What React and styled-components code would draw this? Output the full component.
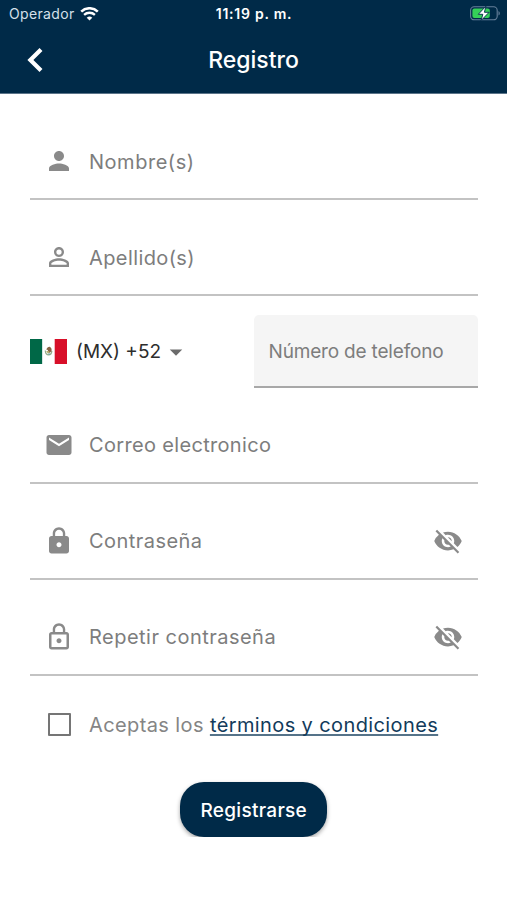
import React, { useState } from 'react'
import styled, { createGlobalStyle } from 'styled-components'
import {
  MdPerson,
  MdPersonOutline,
  MdEmail,
  MdLock,
  MdLockOutline,
  MdVisibilityOff,
  MdArrowDropDown,
} from 'react-icons/md'

function WifiIcon() {
  return (
    <svg width="19" height="14" viewBox="0 0 19 14" fill="none">
      <path d="M1.2 4.6a12 12 0 0 1 16.6 0" stroke="#fff" strokeWidth="2.6" />
      <path d="M4.1 7.9a7.8 7.8 0 0 1 10.8 0" stroke="#fff" strokeWidth="2.3" />
      <path d="M9.5 13.6 6.7 10.8a4 4 0 0 1 5.6 0z" fill="#fff" />
    </svg>
  )
}

function BatteryIcon() {
  return (
    <svg width="31" height="15" viewBox="0 0 31 15">
      <rect
        x="0.6"
        y="0.8"
        width="26.6"
        height="13"
        rx="3.6"
        fill="none"
        stroke="#66809a"
        strokeWidth="1.1"
      />
      <path d="M28.5 5v4.6c1.8-.8 1.8-3.8 0-4.6z" fill="#66809a" />
      <rect x="2.4" y="2.6" width="17.4" height="9.4" rx="2" fill="#35d058" />
      <path
        d="M15.9 0.2 8.3 8.3h4.5l-1.7 6.2 8-8.2h-4.7z"
        fill="#fff"
        stroke="#002a48"
        strokeWidth="0.9"
      />
    </svg>
  )
}

function BackIcon() {
  return (
    <svg width="16" height="25" viewBox="0 0 16 25" fill="none">
      <path d="M14 1.6 3.4 12 14 22.4" stroke="#fff" strokeWidth="4.2" />
    </svg>
  )
}

function MexicoFlag() {
  return (
    <svg width="37" height="25" viewBox="0 0 37 25">
      <rect width="12.4" height="25" fill="#006847" />
      <rect x="12.4" width="12.3" height="25" fill="#fff" />
      <rect x="24.7" width="12.3" height="25" fill="#d80f29" />
      <path
        d="M15.3 11.5c.2 3 1.6 4.4 3.3 4.4s3-1.3 3.2-4"
        fill="none"
        stroke="#93ad8b"
        strokeWidth="1.3"
      />
      <path
        d="M16.4 10.7c.6-2 1.8-3 3.6-2.8 1.5.8 2 2.5 1.4 4.4l-2.3 1.9-1.6-1.6.6-1.5z"
        fill="#866344"
      />
      <path d="M16.2 11.9h2.4l1.4 1.5-2.3 1.1z" fill="#b6ad72" />
      <circle cx="19" cy="15" r="0.8" fill="#5c9aa4" />
    </svg>
  )
}

function Field({ icon, label, type = 'text', spacing, lift, toggle, onToggle }) {
  return (
    <FieldRow $lift={lift}>
      <IconSlot $lift={lift}>{icon}</IconSlot>
      <FieldInput
        type={type}
        placeholder={label}
        aria-label={label}
        $spacing={spacing}
      />
      {toggle && (
        <ToggleButton
          type="button"
          onClick={onToggle}
          aria-label="Mostrar contraseña"
        >
          <MdVisibilityOff size={30} />
        </ToggleButton>
      )}
    </FieldRow>
  )
}

function App() {
  const [showPassword, setShowPassword] = useState(false)
  const [showRepeat, setShowRepeat] = useState(false)

  const handleSubmit = (e) => {
    e.preventDefault()
  }

  return (
    <>
      <GlobalStyle />
      <Header>
        <StatusBar>
          <Carrier>
            Operador
            <WifiIcon />
          </Carrier>
          <Clock>11:19 p. m.</Clock>
          <BatteryIcon />
        </StatusBar>
        <NavBar>
          <BackButton type="button" aria-label="Atrás">
            <BackIcon />
          </BackButton>
          <Title>Registro</Title>
        </NavBar>
      </Header>
      <Form onSubmit={handleSubmit}>
        <Field
          icon={<MdPerson size={30} />}
          label="Nombre(s)"
          spacing="0.53px"
        />
        <Field
          icon={<MdPersonOutline size={30} />}
          label="Apellido(s)"
          spacing="0.4px"
        />
        <PhoneRow>
          <CountryButton type="button">
            <MexicoFlag />
            <CountryCode>(MX) +52</CountryCode>
            <MdArrowDropDown size={30} color="#6b6b6b" />
          </CountryButton>
          <PhoneInput
            type="tel"
            placeholder="Número de telefono"
            aria-label="Número de telefono"
          />
        </PhoneRow>
        <Field
          icon={<MdEmail size={30} />}
          label="Correo electronico"
          spacing="0.33px"
          lift
        />
        <Field
          icon={<MdLock size={30} />}
          label="Contraseña"
          spacing="0.45px"
          type={showPassword ? 'text' : 'password'}
          lift
          toggle
          onToggle={() => setShowPassword(!showPassword)}
        />
        <Field
          icon={<MdLockOutline size={30} />}
          label="Repetir contraseña"
          spacing="0.48px"
          type={showRepeat ? 'text' : 'password'}
          lift
          toggle
          onToggle={() => setShowRepeat(!showRepeat)}
        />
        <TermsRow>
          <Checkbox type="checkbox" aria-label="Aceptar" />
          <TermsText>
            Aceptas los <TermsLink>términos y condiciones</TermsLink>
          </TermsText>
        </TermsRow>
        <SubmitButton type="submit">Registrarse</SubmitButton>
      </Form>
    </>
  )
}

const GlobalStyle = createGlobalStyle`
  * {
    box-sizing: border-box;
  }
  body {
    margin: 0;
    background-color: #ffffff;
    font-family: Inter, 'Liberation Sans', sans-serif;
  }
  button,
  input {
    font-family: inherit;
  }
  svg {
    display: block;
    flex-shrink: 0;
  }
`

const Header = styled.header`
  height: 94px;
  background-color: #002a48;
  color: #ffffff;
  border-bottom: 1px solid #5b7489;
`

const StatusBar = styled.div`
  display: grid;
  grid-template-columns: 1fr auto 1fr;
  align-items: center;
  height: 27px;
  padding: 0 6px 0 9px;

  > :last-child {
    justify-self: end;
  }
`

const Carrier = styled.div`
  display: flex;
  align-items: center;
  gap: 5px;
  font-size: 14px;
  letter-spacing: 0.35px;
  color: #d5e0ea;
`

const Clock = styled.div`
  font-size: 14px;
  font-weight: 600;
  letter-spacing: 0.75px;
  margin-right: 2px;
`

const NavBar = styled.div`
  display: grid;
  grid-template-columns: 80px 1fr 80px;
  align-items: center;
  height: 66px;
`

const BackButton = styled.button`
  border: none;
  background: none;
  padding: 0 0 0 27px;
  cursor: pointer;
`

const Title = styled.h1`
  margin: 0;
  text-align: center;
  font-size: 23px;
  font-weight: 500;
`

const Form = styled.form`
  display: flex;
  flex-direction: column;
  padding: 33px 29.5px 0 30px;
`

const FieldRow = styled.div`
  display: flex;
  align-items: center;
  height: 73px;
  margin-bottom: 23px;
  padding-bottom: ${({ $lift }) => ($lift ? '4px' : '2px')};
  border-bottom: 2px solid #c3c3c3;
`

const IconSlot = styled.div`
  display: flex;
  justify-content: center;
  width: 59px;
  padding-right: 1px;
  padding-bottom: ${({ $lift }) => ($lift ? '0' : '1px')};
  color: #8a8a8a;
`

const FieldInput = styled.input`
  flex: 1;
  min-width: 0;
  border: none;
  padding: 0;
  background: none;
  font-size: 20px;
  letter-spacing: ${({ $spacing }) => $spacing};
  &:focus {
    outline: none;
  }
  &::placeholder {
    color: #7d7d7d;
    opacity: 1;
  }
`

const ToggleButton = styled.button`
  border: none;
  background: none;
  padding: 0 15px 0 14px;
  color: #8a8a8a;
  cursor: pointer;
`

const PhoneRow = styled.div`
  display: flex;
  justify-content: space-between;
  height: 73px;
  margin: -4px 0 23px;
`

const CountryButton = styled.button`
  display: flex;
  align-items: center;
  border: none;
  background: none;
  padding: 0;
  cursor: pointer;
`

const CountryCode = styled.span`
  padding-left: 9px;
  font-size: 19px;
  color: #2d2d2d;
`

const PhoneInput = styled.input`
  width: 224px;
  padding: 2px 15px 0;
  border: none;
  border-bottom: 2px solid #a8a8a8;
  border-radius: 5px 5px 0 0;
  background-color: #f5f5f5;
  font-size: 19px;
  letter-spacing: -0.18px;
  &:focus {
    outline: none;
  }
  &::placeholder {
    color: #7d7d7d;
    opacity: 1;
  }
`

const TermsRow = styled.label`
  display: flex;
  align-items: center;
  height: 50px;
  padding-left: 18px;
`

const Checkbox = styled.input`
  appearance: none;
  width: 23px;
  height: 23px;
  margin: 0 18px 0 0;
  border: 2px solid #757575;
  border-radius: 1px;
  &:checked {
    background-color: #002a48;
  }
`

const TermsText = styled.span`
  padding-top: 1px;
  font-size: 20px;
  letter-spacing: 0.39px;
  color: #858585;
  white-space: nowrap;
`

const TermsLink = styled.span`
  color: #123b5b;
  text-decoration: underline;
  text-decoration-color: #557389;
  text-decoration-thickness: 2px;
  text-decoration-skip-ink: none;
  text-underline-offset: 2px;
`

const SubmitButton = styled.button`
  align-self: center;
  width: 147px;
  height: 55px;
  padding: 1px 0 0;
  margin-top: 33px;
  border: none;
  border-radius: 24px;
  background-color: #002a48;
  box-shadow: 0 2px 4px rgba(0, 0, 0, 0.35);
  color: #ffffff;
  font-size: 19px;
  font-weight: 500;
  letter-spacing: 0.3px;
  cursor: pointer;
`

export default App
